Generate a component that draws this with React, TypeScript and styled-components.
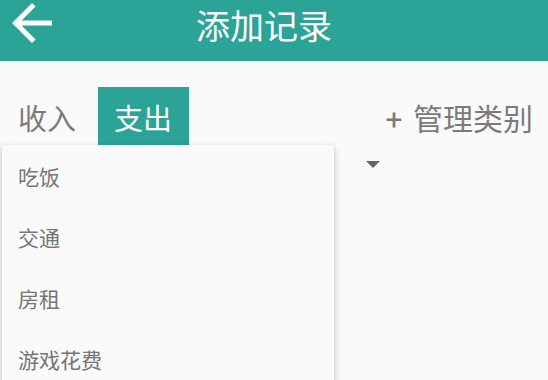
import { styled, createGlobalStyle } from "styled-components";

const GlobalStyle = createGlobalStyle`
  html, body {
    margin: 0;
    padding: 0;
    background: #fafafa;
    font-family: "Noto Sans CJK SC", "Noto Sans", sans-serif;
  }
  * { box-sizing: border-box; }
`;

const TEAL = "#2ba396";

const Page = styled.div`
  position: relative;
  width: 548px;
  height: 380px;
  overflow: hidden;
  background: #fafafa;
`;

const AppBar = styled.header`
  display: flex;
  align-items: flex-start;
  height: 61px;
  background: ${TEAL};
  padding: 0 0 0 12px;
`;

const BackButton = styled.button`
  display: flex;
  flex-shrink: 0;
  width: 40px;
  height: 40px;
  margin-top: 3px;
  padding: 0;
  border: none;
  background: none;
  cursor: pointer;
`;

const BarTitle = styled.h1`
  margin: 0 0 0 144px;
  font-size: 34px;
  font-weight: 400;
  line-height: 1.45;
  white-space: nowrap;
  color: #fff;
`;

const TypeRow = styled.div`
  display: flex;
  align-items: center;
  height: 60px;
  margin-top: 26px;
  padding: 0 15px 0 2px;
`;

const Tab = styled.button<{ $active?: boolean }>`
  height: 100%;
  padding: 0 17px 0 16px;
  margin-right: 5px;
  border: none;
  font-family: inherit;
  font-size: 29px;
  line-height: 1;
  color: ${(p) => (p.$active ? "#fff" : "#7a7a7a")};
  background: ${(p) => (p.$active ? TEAL : "transparent")};
`;

const Manage = styled.span`
  margin-left: auto;
  font-family: Roboto, "Noto Sans CJK SC", sans-serif;
  font-size: 30px;
  word-spacing: 3px;
  color: #7a7a7a;
  white-space: nowrap;
`;

const Spinner = styled.div`
  display: flex;
  justify-content: flex-end;
  width: 380px;
  padding: 14px 0 0;
`;

const Caret = styled.span`
  width: 0;
  height: 0;
  border-left: 7px solid transparent;
  border-right: 7px solid transparent;
  border-top: 7px solid #666;
`;

const Popup = styled.ul`
  position: absolute;
  top: 145px;
  left: 2px;
  width: 332px;
  height: 250px;
  margin: 0;
  padding: 0;
  list-style: none;
  background: #fafafa;
  border-radius: 2px;
  box-shadow: 0 3px 8px rgba(0, 0, 0, 0.2), 0 1px 3px rgba(0, 0, 0, 0.12);
`;

const Option = styled.li`
  display: flex;
  align-items: center;
  height: 61px;
  padding-left: 16px;
  font-size: 21px;
  color: #757575;
`;

const categories = ["吃饭", "交通", "房租", "游戏花费"];

export default function App() {
  return (
    <Page>
      <GlobalStyle />
      <AppBar>
        <BackButton aria-label="返回">
          <svg width="40" height="40" viewBox="4 4 16 16" fill="#fff">
            <path d="M20 11H7.83l5.59-5.59L12 4l-8 8 8 8 1.41-1.41L7.83 13H20v-2z" />
          </svg>
        </BackButton>
        <BarTitle>添加记录</BarTitle>
      </AppBar>
      <TypeRow>
        <Tab>收入</Tab>
        <Tab $active>支出</Tab>
        <Manage>+ 管理类别</Manage>
      </TypeRow>
      <Spinner>
        <Caret />
      </Spinner>
      <Popup>
        {categories.map((c) => (
          <Option key={c}>{c}</Option>
        ))}
      </Popup>
    </Page>
  );
}
